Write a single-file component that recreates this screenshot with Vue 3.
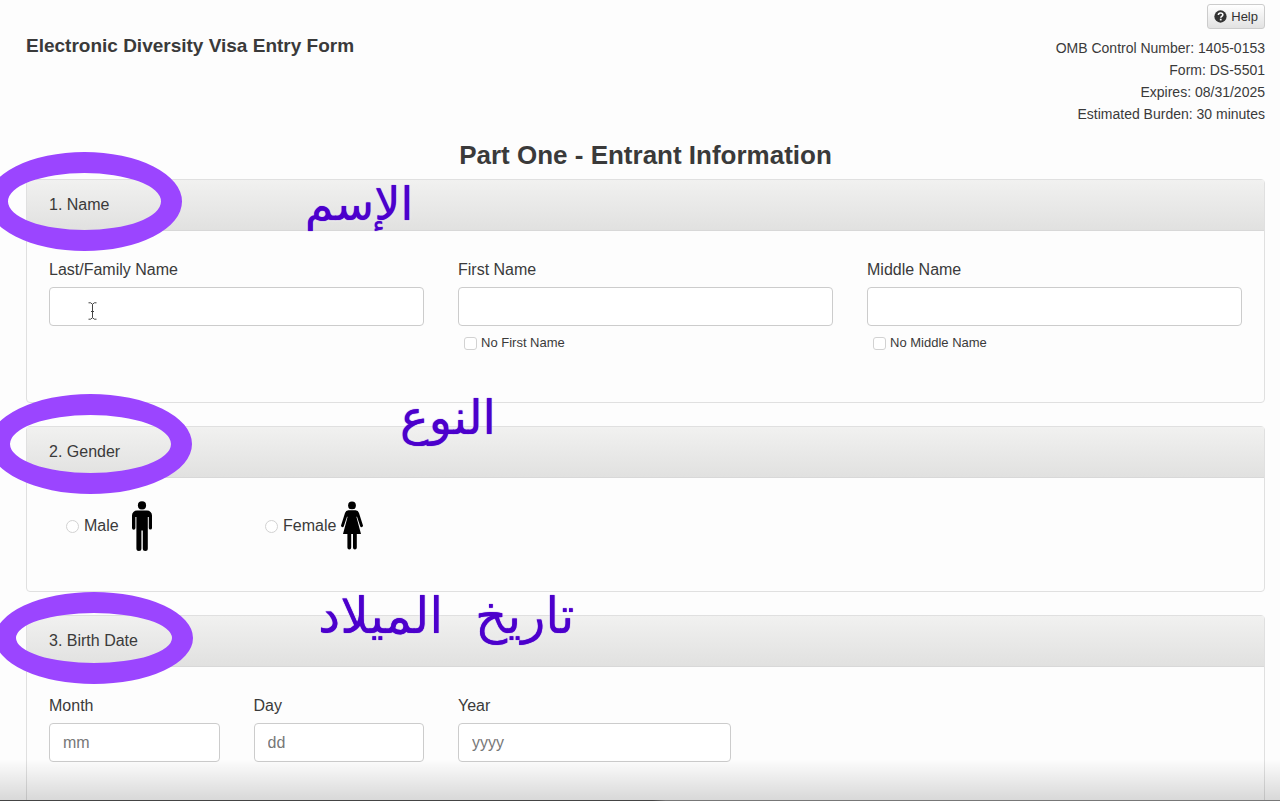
<template>
    <div class="page">
        <header class="top">
            <h1>Electronic Diversity Visa Entry Form</h1>
            <div class="info">
                <button type="button" class="help">
                    <svg viewBox="0 0 14 14" width="13" height="13" aria-hidden="true">
                        <circle cx="7" cy="7" r="6.6" fill="#333" />
                        <path d="M4.7 5.4C4.8 3.8 5.8 3.2 7.1 3.2c1.3 0 2.4.8 2.4 2 0 1.7-2.2 1.7-2.2 3.2" fill="none" stroke="#fff" stroke-width="1.7" />
                        <rect x="6.3" y="9.4" width="1.9" height="1.8" fill="#fff" />
                    </svg>
                    Help
                </button>
                <p v-for="line in info" :key="line">{{ line }}</p>
            </div>
        </header>

        <h2>Part One - Entrant Information</h2>

        <section class="panel name">
            <div class="panel-heading">
                <h3>1. Name</h3>
                <span class="ring"></span>
                <span class="note" lang="ar" dir="rtl">الإسم</span>
            </div>
            <div class="panel-body grid">
                <div v-for="field in names" :key="field.id" class="wide">
                    <label :for="field.id">{{ field.label }}</label>
                    <input :id="field.id" v-model="field.value" type="text" class="text" :disabled="field.none" />
                    <label v-if="field.check" class="check">
                        <input v-model="field.none" type="checkbox" />
                        {{ field.check }}
                    </label>
                </div>
                <svg class="cursor" viewBox="0 0 9 18" width="9" height="18" aria-hidden="true">
                    <path d="M.5 .8h2.2L4.5 2.3 6.3 .8h2.2M.5 17.2h2.2l1.8-1.5 1.8 1.5h2.2M4.5 2.3v13.4M3 9.5h3" fill="none" stroke="#444" />
                </svg>
            </div>
        </section>

        <section class="panel gender">
            <div class="panel-heading">
                <h3>2. Gender</h3>
                <span class="ring"></span>
                <span class="note" lang="ar" dir="rtl">النوع</span>
            </div>
            <div class="panel-body options">
                <label class="option">
                    <input v-model="gender" type="radio" name="gender" value="male" />
                    Male
                    <svg class="male" viewBox="0 0 20 50" width="20" height="50" aria-hidden="true">
                        <circle cx="10" cy="4.4" r="4.1" />
                        <path d="M5 9.5h10a5 5 0 0 1 5 5V27a1.6 1.6 0 0 1-3.2 0V16h-1v31.5a2.4 2.4 0 0 1-5 0V29.5h-1.4v18a2.4 2.4 0 0 1-5 0V16h-1v11a1.6 1.6 0 0 1-3.4 0V14.5a5 5 0 0 1 5-5z" />
                    </svg>
                </label>
                <label class="option">
                    <input v-model="gender" type="radio" name="gender" value="female" />
                    Female
                    <svg viewBox="0 0 22 50" width="22" height="50" aria-hidden="true">
                        <circle cx="11" cy="4.4" r="3.9" />
                        <path d="M7.5 9.3h7a3.6 3.6 0 0 1 3.5 2.6l3.9 12.4a1.4 1.4 0 0 1-2.7.9L16 15.8h-.6L20 33h-4.2v13.6a1.9 1.9 0 0 1-3.8 0V33h-1.8v13.6a1.9 1.9 0 0 1-3.8 0V33H2L6.6 15.8H6l-3.2 9.4a1.4 1.4 0 0 1-2.7-.9L4 11.9a3.6 3.6 0 0 1 3.5-2.6z" />
                    </svg>
                </label>
            </div>
        </section>

        <section class="panel birth">
            <div class="panel-heading">
                <h3>3. Birth Date</h3>
                <span class="ring"></span>
                <span class="note" lang="ar" dir="rtl">تاريخ&nbsp; الميلاد</span>
            </div>
            <div class="panel-body grid">
                <div v-for="field in birth" :key="field.id" :class="field.id">
                    <label :for="field.id">{{ field.label }}</label>
                    <input :id="field.id" v-model="field.value" type="text" class="text" :placeholder="field.hint" />
                </div>
            </div>
        </section>

        <div class="shade"></div>
    </div>
</template>

<script setup>
import { ref } from "vue";

const info = [
    "OMB Control Number: 1405-0153",
    "Form: DS-5501",
    "Expires: 08/31/2025",
    "Estimated Burden: 30 minutes",
];

const names = ref([
    { id: "last", label: "Last/Family Name", value: "" },
    { id: "first", label: "First Name", value: "", check: "No First Name", none: false },
    { id: "middle", label: "Middle Name", value: "", check: "No Middle Name", none: false },
]);

const gender = ref("");

const birth = ref([
    { id: "month", label: "Month", value: "", hint: "mm" },
    { id: "day", label: "Day", value: "", hint: "dd" },
    { id: "year", label: "Year", value: "", hint: "yyyy" },
]);
</script>

<style>
body {
    margin: 0;
    background: #fdfdfd;
}
</style>

<style scoped>
.page {
    position: relative;
    box-sizing: border-box;
    height: 100vh;
    overflow: hidden;
    padding: 4px 15px 0 26px;
    background: #fdfdfd;
    color: #3a3a3a;
    font-family: "Liberation Sans", Arial, sans-serif;
    font-size: 16px;
    line-height: 22px;
}
h1,
h2,
h3,
p {
    margin: 0;
}
.top {
    display: flex;
    justify-content: space-between;
}
h1 {
    margin-top: 31px;
    font-size: 19px;
}
.info {
    display: flex;
    flex-direction: column;
    align-items: flex-end;
    font-size: 14px;
}
.help {
    display: flex;
    align-items: center;
    gap: 4px;
    height: 25px;
    margin-bottom: 8px;
    padding: 0 6px;
    border: 1px solid #ccc;
    border-radius: 3px;
    background: linear-gradient(#fff, #e2e2e2);
    color: #333;
    font: inherit;
    font-size: 13px;
}
h2 {
    margin: 16px 0 10px;
    font-size: 26px;
    line-height: 28px;
    text-align: center;
}
.panel {
    margin-bottom: 23px;
    border: 1px solid #e0e0e0;
    border-radius: 4px;
}
.panel-heading {
    position: relative;
    padding: 14px 22px;
    border-bottom: 1px solid #d8d8d8;
    background: linear-gradient(#f1f1f0, #e1e1e0);
}
h3 {
    font-size: 16px;
    font-weight: normal;
}
.panel-body {
    position: relative;
    padding: 28px 22px;
}
.name .panel-body {
    padding-bottom: 48px;
}
.grid {
    display: grid;
    grid-template-columns: repeat(12, 1fr);
    column-gap: 34px;
}
.wide {
    grid-column: span 4;
}
.month,
.day {
    grid-column: span 2;
}
.year {
    grid-column: span 3;
}
.grid label {
    display: block;
}
.text {
    display: block;
    box-sizing: border-box;
    width: 100%;
    height: 39px;
    margin-top: 6px;
    padding: 0 13px;
    border: 1px solid #ccc;
    border-radius: 4px;
    background: #fff;
    color: #333;
    font: inherit;
}
.text::placeholder {
    color: #777;
}
.grid .check {
    display: flex;
    align-items: center;
    gap: 4px;
    margin: 6px 0 0 6px;
    font-size: 13px;
}
.check input,
.option input {
    appearance: none;
    box-sizing: border-box;
    width: 13px;
    height: 13px;
    margin: 0;
    border: 1px solid #d2d2d2;
    border-radius: 3px;
    background: #fff;
}
.option input {
    border-radius: 50%;
}
.check input:checked,
.option input:checked {
    background: #555;
}
.cursor {
    position: absolute;
    left: 61px;
    top: 71px;
}
.gender .options {
    display: flex;
    padding: 23px 39px 40px;
}
.option {
    display: flex;
    align-items: center;
    gap: 5px;
    width: 199px;
}
.male {
    margin-left: 8px;
}
.birth {
    min-height: 300px;
}

/* hand marks laid over the headings */
.ring {
    position: absolute;
    box-sizing: border-box;
    border: 21px solid #9b45ff;
    border-radius: 50%;
}
.name .ring {
    left: -40px;
    top: -28px;
    width: 195px;
    height: 99px;
}
.gender .ring {
    left: -38px;
    top: -33px;
    width: 203px;
    height: 100px;
}
.birth .ring {
    left: -32px;
    top: -24px;
    width: 198px;
    height: 92px;
}
.ring,
.note {
    z-index: 1;
    pointer-events: none;
}
.note {
    position: absolute;
    color: #4c00cc;
    font-family: "DejaVu Sans", sans-serif;
    font-size: 48px;
    line-height: 60px;
    text-shadow: 0 0 1px #4c00cc, 0 0 3px #fff;
    white-space: nowrap;
}
.name .note {
    left: 278px;
    top: -6px;
    font-size: 46px;
}
.gender .note {
    left: 373px;
    top: -40px;
}
.birth .note {
    left: 291px;
    top: -30px;
    font-size: 50px;
}

.shade {
    position: absolute;
    right: 0;
    bottom: 0;
    left: 0;
    z-index: 2;
    height: 42px;
    background:
        linear-gradient(90deg, #444 51%, #777 52%) bottom / 100% 1px no-repeat,
        linear-gradient(transparent, rgba(0, 0, 0, 0.15));
    pointer-events: none;
}
</style>
